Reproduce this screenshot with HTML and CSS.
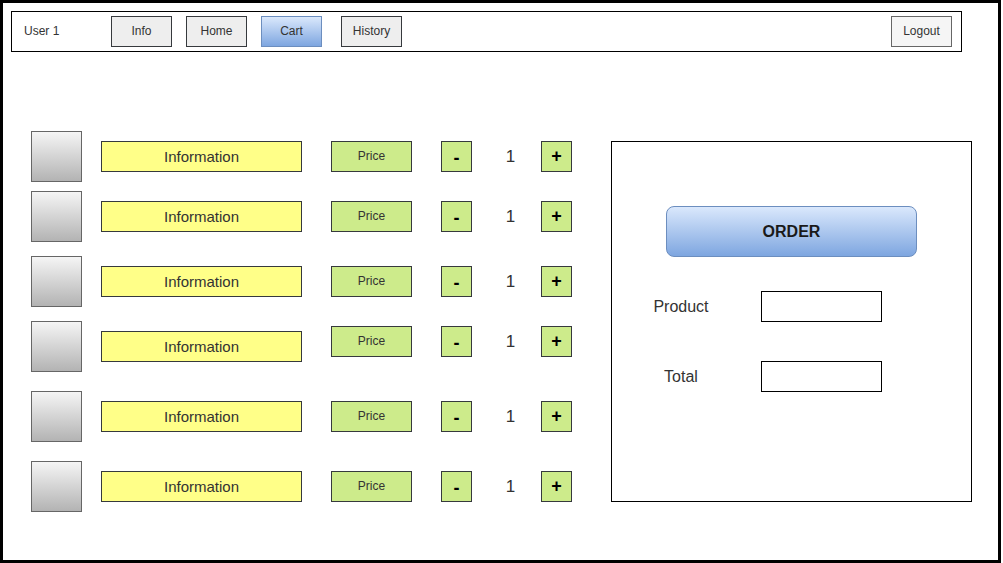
FILE: index.html
```html
<!DOCTYPE html>
<html>
<head>
<meta charset="utf-8">
<link rel="stylesheet" href="styles.css">
</head>
<body>
<div class="frame">
  <nav class="nav">
    <span class="user">User 1</span>
    <div class="nav-btns">
      <button class="nbtn">Info</button>
      <button class="nbtn">Home</button>
      <button class="nbtn nbtn-active">Cart</button>
      <button class="nbtn nbtn-wide-gap">History</button>
    </div>
    <button class="nbtn logout">Logout</button>
  </nav>
  <div class="main">
    <div class="list">
      <div class="row">
        <div class="thumb"></div>
        <div class="info">Information</div>
        <div class="price">Price</div>
        <div class="step minus">-</div>
        <div class="qty">1</div>
        <div class="step">+</div>
      </div>
      <div class="row gap9">
        <div class="thumb"></div>
        <div class="info">Information</div>
        <div class="price">Price</div>
        <div class="step minus">-</div>
        <div class="qty">1</div>
        <div class="step">+</div>
      </div>
      <div class="row gap14">
        <div class="thumb"></div>
        <div class="info">Information</div>
        <div class="price">Price</div>
        <div class="step minus">-</div>
        <div class="qty">1</div>
        <div class="step">+</div>
      </div>
      <div class="row gap14 raised">
        <div class="thumb"></div>
        <div class="info">Information</div>
        <div class="price">Price</div>
        <div class="step minus">-</div>
        <div class="qty">1</div>
        <div class="step">+</div>
      </div>
      <div class="row gap19">
        <div class="thumb"></div>
        <div class="info">Information</div>
        <div class="price">Price</div>
        <div class="step minus">-</div>
        <div class="qty">1</div>
        <div class="step">+</div>
      </div>
      <div class="row gap19">
        <div class="thumb"></div>
        <div class="info">Information</div>
        <div class="price">Price</div>
        <div class="step minus">-</div>
        <div class="qty">1</div>
        <div class="step">+</div>
      </div>
    </div>
    <div class="panel">
      <button class="order">ORDER</button>
      <div class="field field-first">
        <span class="flabel">Product</span>
        <div class="fbox"></div>
      </div>
      <div class="field field-second">
        <span class="flabel">Total</span>
        <div class="fbox"></div>
      </div>
    </div>
  </div>
</div>
</body>
</html>
```
FILE: styles.css
```css
* { box-sizing: border-box; }
html, body { margin: 0; padding: 0; background: #fff; }
body { font-family: "Liberation Sans", Arial, sans-serif; }

.frame {
  width: 1001px;
  height: 563px;
  border: 3px solid #000;
  padding: 8px 0 0 8px;
}

.nav {
  width: 951px;
  height: 41px;
  border: 1px solid #000;
  display: flex;
  align-items: center;
  padding: 0 9px 0 12px;
}
.user {
  width: 87px;
  font-size: 12px;
  color: #333;
  margin-bottom: 2px;
}
.nav-btns { display: flex; gap: 14px; }
.nbtn {
  width: 61px;
  height: 31px;
  border: 1px solid #36393d;
  background: #eeeeee;
  font-family: inherit;
  font-size: 12px;
  color: #333;
  padding: 0 0 2px 0;
  margin: 0;
}
.nbtn-active {
  background: linear-gradient(#dae8fc, #7ea6e0);
  border-color: #6c8ebf;
}
.nbtn-wide-gap { margin-left: 5px; }
.logout {
  margin-left: auto;
  background: #f5f5f5;
  border-color: #666;
}

.main {
  display: flex;
  align-items: flex-start;
  padding: 79px 0 0 20px;
}

.list {
  width: 541px;
  display: flex;
  flex-direction: column;
}
.row {
  display: flex;
  align-items: flex-start;
  height: 51px;
}
.gap9 { margin-top: 9px; }
.gap14 { margin-top: 14px; }
.gap19 { margin-top: 19px; }

.thumb {
  width: 51px;
  height: 51px;
  border: 1px solid #666;
  background: linear-gradient(#f5f5f5, #b3b3b3);
}
.info {
  width: 201px;
  height: 31px;
  margin: 10px 0 0 19px;
  border: 1px solid #36393d;
  background: #ffff88;
  display: flex;
  align-items: center;
  justify-content: center;
  font-size: 15px;
  color: #333;
}
.price {
  width: 81px;
  height: 31px;
  margin: 10px 0 0 29px;
  border: 1px solid #36393d;
  background: #cdeb8b;
  display: flex;
  align-items: center;
  justify-content: center;
  font-size: 12px;
  color: #333;
  padding-bottom: 2px;
}
.step {
  width: 31px;
  height: 31px;
  margin-top: 10px;
  border: 1px solid #36393d;
  background: #cdeb8b;
  display: flex;
  align-items: center;
  justify-content: center;
  font-size: 18px;
  font-weight: bold;
  color: #000;
}
.minus { padding-top: 3px; }
.price + .step { margin-left: 29px; }
.qty {
  width: 69px;
  height: 31px;
  margin-top: 10px;
  display: flex;
  align-items: center;
  justify-content: center;
  padding: 0 0 0 8px;
  font-size: 17px;
  color: #333;
}
.raised .price, .raised .step, .raised .qty { margin-top: 5px; }

.panel {
  width: 361px;
  height: 361px;
  margin: 10px 0 0 39px;
  border: 1px solid #000;
  display: flex;
  flex-direction: column;
  align-items: flex-start;
  padding-top: 64px;
}
.order {
  width: 251px;
  height: 51px;
  margin-left: 54px;
  border: 1px solid #6c8ebf;
  border-radius: 8px;
  background: linear-gradient(#dae8fc, #7ea6e0);
  font-family: inherit;
  font-size: 16px;
  font-weight: bold;
  color: #1a1a1a;
  padding: 0;
}
.field {
  display: flex;
  align-items: center;
  margin-left: 29px;
}
.field-first { margin-top: 34px; }
.field-second { margin-top: 39px; }
.flabel {
  width: 80px;
  text-align: center;
  font-size: 16px;
  color: #333;
  margin-right: 40px;
}
.fbox {
  width: 121px;
  height: 31px;
  border: 1px solid #000;
}
```
